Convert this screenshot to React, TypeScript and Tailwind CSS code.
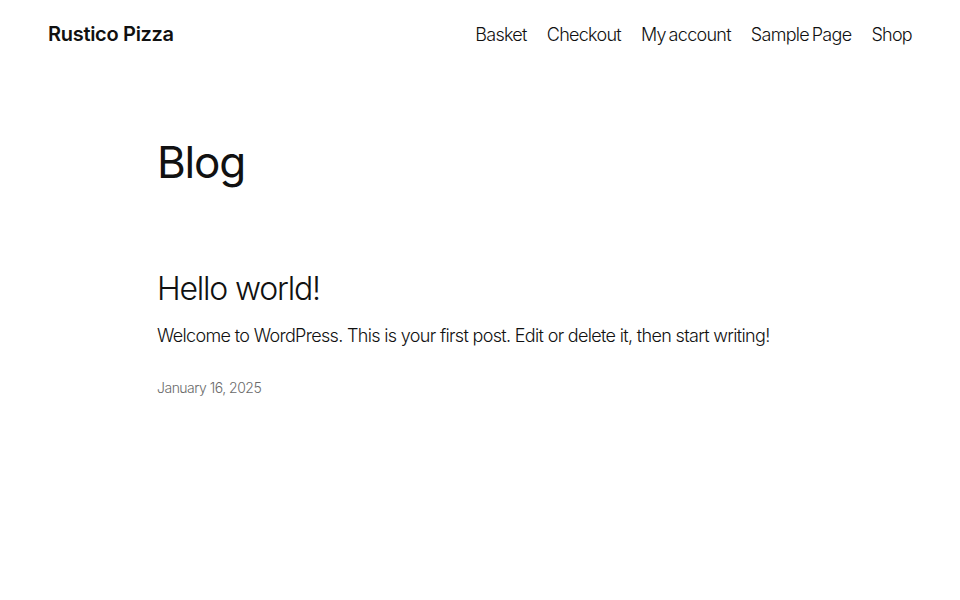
export default function App() {
  const links = ["Basket", "Checkout", "My account", "Sample Page", "Shop"]

  return (
    <div className="min-h-screen bg-white text-[#111111] font-['Inter',sans-serif]">
      <header className="flex items-center justify-between px-12 h-[68px]">
        <a className="text-[20px] font-semibold tracking-[-0.3px]">Rustico Pizza</a>
        <nav className="flex items-center gap-5 text-[18px] font-light tracking-[-0.72px] [word-spacing:-1.5px]">
          {links.map((l) => (
            <a key={l}>{l}</a>
          ))}
        </nav>
      </header>

      <main className="mx-auto w-[646px] pt-[67px]">
        <h1 className="text-[44px] font-normal tracking-[-1.2px] leading-tight">Blog</h1>

        <article className="mt-[79px]">
          <h2 className="text-[32px] font-light tracking-[-1.2px] leading-tight">Hello world!</h2>
          <p className="mt-[13px] text-[18px] font-light tracking-[-0.67px]">
            Welcome to WordPress. This is your first post. Edit or delete it, then start writing!
          </p>
          <p className="mt-7 text-[14px] font-light tracking-[-0.5px] text-[#6b6b6b]">January 16, 2025</p>
        </article>
      </main>
    </div>
  )
}
